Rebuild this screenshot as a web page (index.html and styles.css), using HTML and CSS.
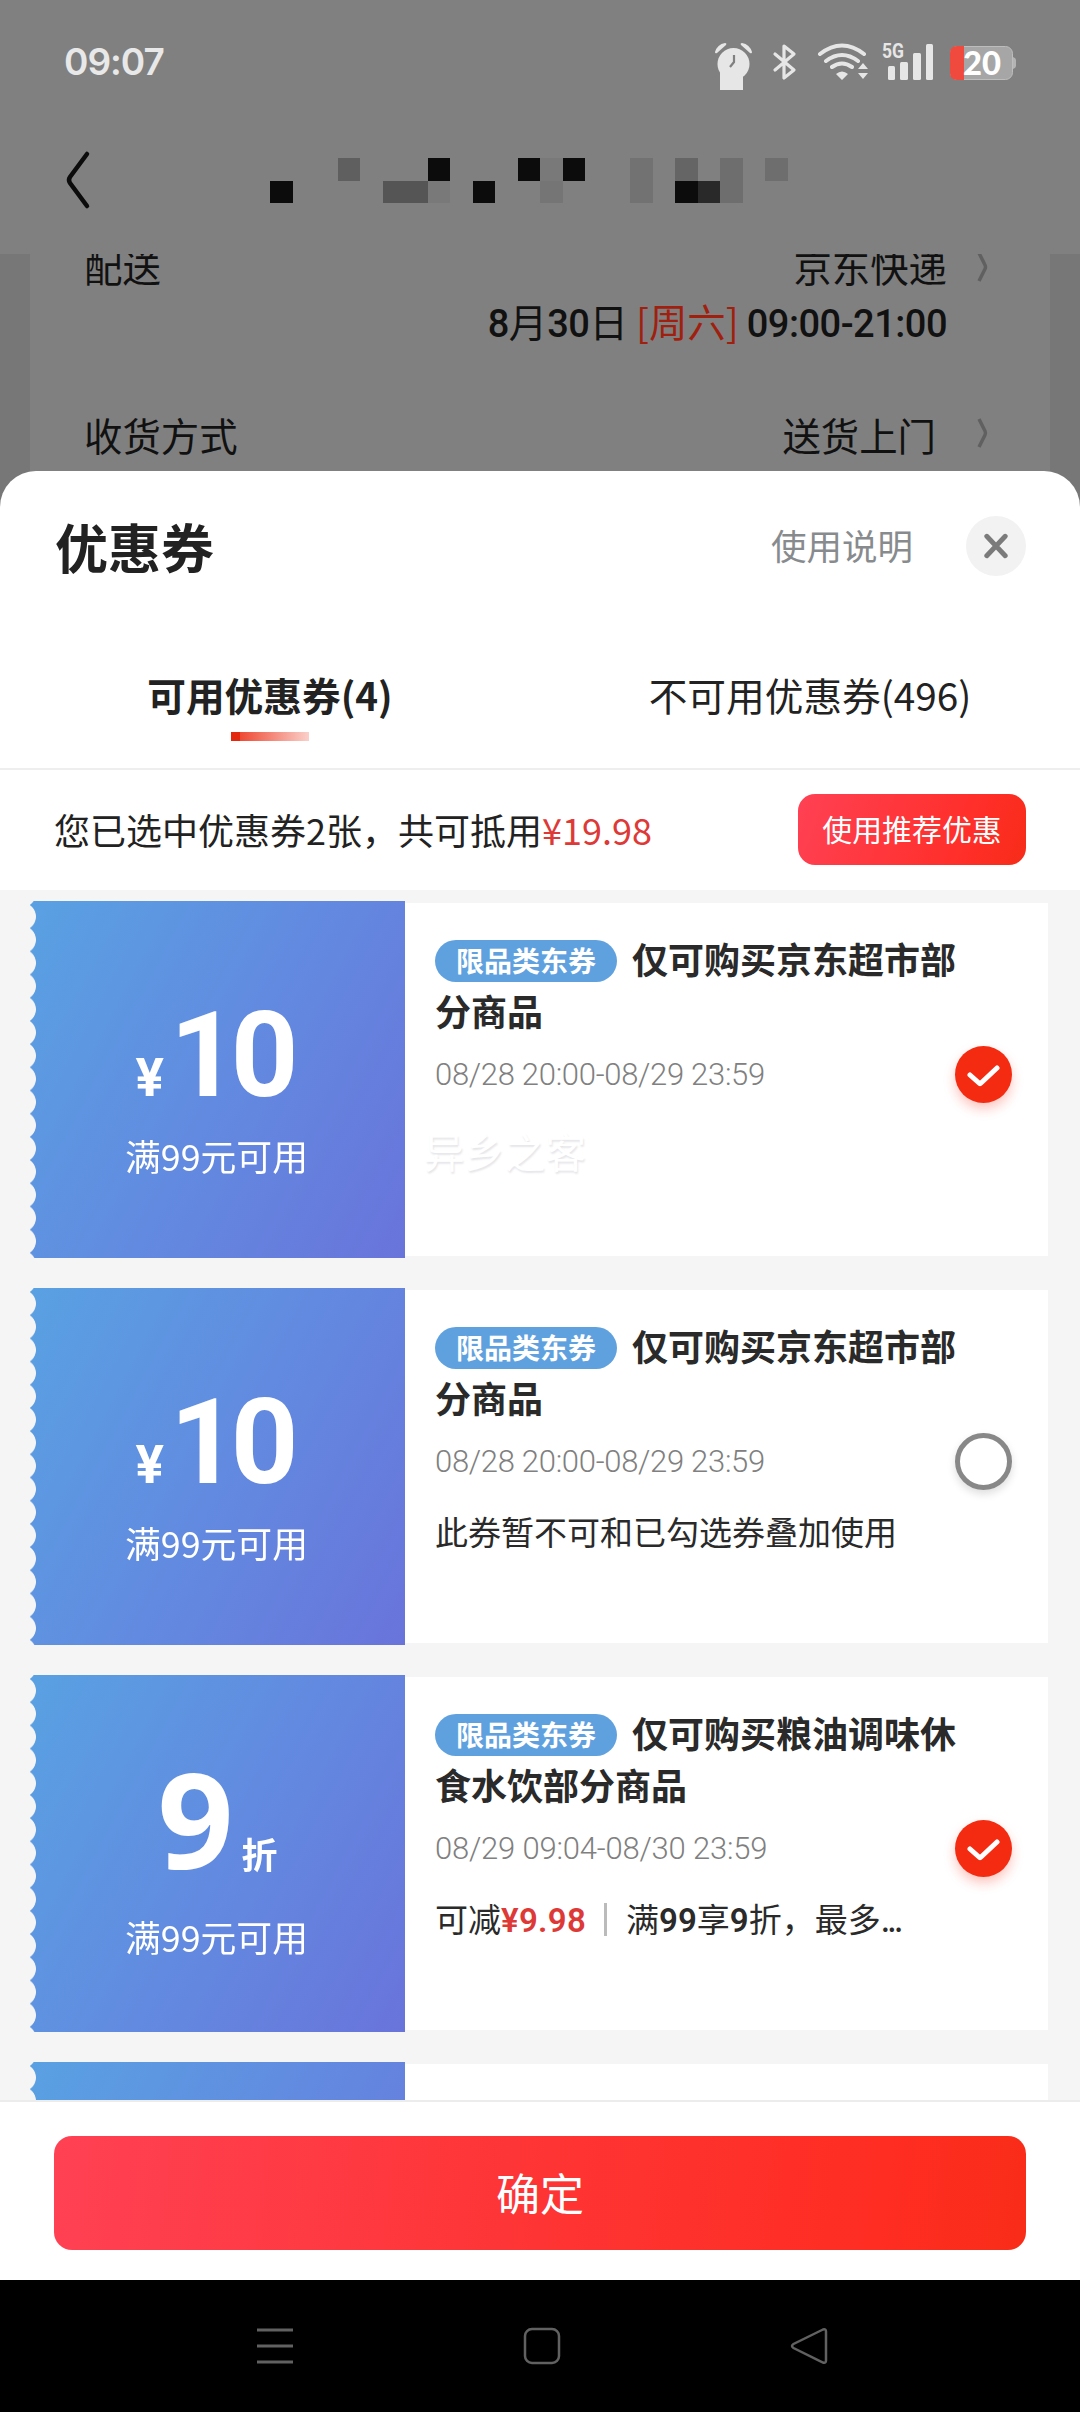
FILE: index.html
```html
<!DOCTYPE html>
<html lang="zh-CN">
<head>
<meta charset="utf-8">
<title>优惠券</title>
<link rel="stylesheet" href="styles.css">
</head>
<body>
<div class="screen">
  <header class="top">
    <div class="status">
      <span class="time">09:07</span>
      <svg class="status-icons" viewBox="0 0 306 52" width="306" height="52">
        <g fill="#e6e6e6">
          <circle cx="23.500" cy="24" r="16"/>
          <rect x="10" y="24" width="23" height="26"/>
          <path d="M5 12a13 13 0 0 1 10-9q2 0 1 2L7 13q-2 1-2-1zM42 12A13 13 0 0 0 32 3q-2 0-1 2l9 8q2 1 2-1z"/>
        </g>
        <path d="M24 15v7l-4 5" fill="none" stroke="#808080" stroke-width="2.200"/>
        <path d="M65 14l19 16-10 8V6l10 8-19 16" fill="none" stroke="#e6e6e6" stroke-width="3.200" stroke-linejoin="round" stroke-linecap="round"/>
        <g fill="none" stroke="#e6e6e6" stroke-width="4" stroke-linecap="round">
          <path d="M110 14Q132-3 154 14M116 21Q132 9 148 21M122 27Q132 20 142 27"/>
        </g>
        <path d="M126 34q6-5 12 0l-6 6zM148 29l5-6 5 6zM148 33l5 6 5-6z" fill="#e6e6e6"/>
        <text class="net" x="172" y="18" textLength="22" lengthAdjust="spacingAndGlyphs">5G</text>
        <g fill="#e6e6e6"><rect x="178" y="26" width="7" height="14" rx="1.500"/><rect x="190" y="22" width="8" height="18" rx="1.500"/><rect x="203" y="13" width="8" height="27" rx="1.500"/><rect x="216" y="4" width="7" height="36" rx="1.500"/></g>
        <rect x="240.500" y="6.500" width="62" height="33" rx="7" fill="#a6a6a6" stroke="#bdbdbd"/>
        <path d="M303 17q3 1 3 3v6q0 2-3 3z" fill="#b4b4b4"/>
        <path d="M254 6h-7q-7 0-7 7v20q0 7 7 7h7z" fill="#f04a3e"/>
        <text class="level" x="253" y="35" textLength="38" lengthAdjust="spacingAndGlyphs">20</text>
      </svg>
    </div>
    <div class="nav">
      <svg class="back" viewBox="0 0 26 60" width="26" height="60"><path d="M22 4L5 27q-2 3 0 6l17 23" fill="none" stroke="#0c0c0c" stroke-width="4.500" stroke-linecap="round"/></svg>
      <svg class="blocks" viewBox="0 0 23 2" width="518" height="45" preserveAspectRatio="none" shape-rendering="crispEdges">
        <g fill="#0c0c0c"><path d="M0 1h1v1H0zM7 0h1v1H7zM9 1h1v1H9zM11 0h1v1h-1zM13 0h1v1h-1zM18 1h1v1h-1z"/></g>
        <path d="M3 0h1v1H3z" fill="#5f5f5f"/><path d="M5 1h2v1H5z" fill="#555"/>
        <path d="M7 1h1v1H7zM12 0h1v1h-1z" fill="#797979"/><path d="M12 1h1v1h-1z" fill="#757575"/>
        <path d="M16 0h1v2h-1z" fill="#727272"/><path d="M18 0h1v1h-1z" fill="#656565"/>
        <path d="M19 1h1v1h-1z" fill="#292929"/><path d="M20 0h1v2h-1zM22 0h1v1h-1z" fill="#6e6e6e"/>
      </svg>
    </div>
  </header>

  <section class="order">
    <div class="panel">
      <div class="row row-ship"><span>配送</span><span class="value">京东快递</span><svg class="chev" viewBox="0 0 12 30" width="12" height="30"><path d="M2 1l6 12q1 2 0 4L2 29" fill="none" stroke="#606060" stroke-width="3.500"/></svg></div>
      <div class="row row-date"><span class="date"><b>8</b>月<b>30</b>日 <i>[周六]</i> <b class="hours">09:00-21:00</b></span></div>
      <div class="row row-way"><span>收货方式</span><span class="value">送货上门</span><svg class="chev" viewBox="0 0 12 30" width="12" height="30"><path d="M2 1l6 12q1 2 0 4L2 29" fill="none" stroke="#606060" stroke-width="3.500"/></svg></div>
    </div>
  </section>

  <main class="sheet">
    <div class="sheet-head">
      <h1>优惠券</h1>
      <span class="help">使用说明</span>
      <span class="close"><svg viewBox="0 0 24 24" width="26" height="26"><path d="M3.500 3l17 18M20.500 3l-17 18" stroke="#7b7b7b" stroke-width="4.500" stroke-linecap="round"/></svg></span>
    </div>
    <div class="tabs">
      <div class="tab active"><span>可用优惠券(4)</span></div>
      <div class="tab"><span>不可用优惠券(496)</span></div>
    </div>
    <div class="summary">
      <p>您已选中优惠券2张，共可抵用<span class="price">¥19.98</span></p>
      <button class="recommend">使用推荐优惠</button>
    </div>

    <div class="list">
      <article class="coupon">
        <div class="stub"><div class="amount"><small>¥</small>10</div><div class="cond">满99元可用</div></div>
        <div class="body">
          <h2><span class="tag">限品类东券</span>仅可购买京东超市部分商品</h2>
          <p class="time-range">08/28 20:00-08/29 23:59</p>
          <p class="ghost">异乡之客</p>
          <span class="check on"><svg viewBox="0 0 36 24" width="36" height="24"><path d="M4 12l9 8q1 1 2 0L31 5" fill="none" stroke="#fff" stroke-width="5" stroke-linecap="round" stroke-linejoin="round"/></svg></span>
        </div>
      </article>
      <article class="coupon">
        <div class="stub"><div class="amount"><small>¥</small>10</div><div class="cond">满99元可用</div></div>
        <div class="body">
          <h2><span class="tag">限品类东券</span>仅可购买京东超市部分商品</h2>
          <p class="time-range">08/28 20:00-08/29 23:59</p>
          <p class="note">此券暂不可和已勾选券叠加使用</p>
          <span class="check"></span>
        </div>
      </article>
      <article class="coupon">
        <div class="stub discount"><div class="amount">9<em>折</em></div><div class="cond">满99元可用</div></div>
        <div class="body">
          <h2><span class="tag">限品类东券</span>仅可购买粮油调味休食水饮部分商品</h2>
          <p class="time-range wide">08/29 09:04-08/30 23:59</p>
          <p class="note">可减<b class="price">¥9.98</b><span class="bar"></span>满<b>99</b>享<b>9</b>折，最多<span class="dots">...</span></p>
          <span class="check on"><svg viewBox="0 0 36 24" width="36" height="24"><path d="M4 12l9 8q1 1 2 0L31 5" fill="none" stroke="#fff" stroke-width="5" stroke-linecap="round" stroke-linejoin="round"/></svg></span>
        </div>
      </article>
      <article class="coupon"><div class="stub"></div><div class="body"></div></article>
    </div>

    <div class="actions"><button class="confirm">确定</button></div>
  </main>

  <footer class="sysnav">
    <svg viewBox="0 0 38 38" width="38" height="38"><path d="M1 3h36M1 19h36M1 35h36" stroke="#616161" stroke-width="3"/></svg>
    <svg viewBox="0 0 38 38" width="38" height="38"><rect x="2" y="2" width="34" height="34" rx="7" fill="none" stroke="#616161" stroke-width="2.500"/></svg>
    <svg viewBox="0 0 38 38" width="38" height="38"><path d="M33 2.500L3.500 17q-3 2 0 4L33 35.500q3 1 3-2v-29q0-3-3-2z" fill="none" stroke="#616161" stroke-width="2.500"/></svg>
  </footer>
</div>
</body>
</html>
```
FILE: styles.css
```css
* { box-sizing: border-box; margin: 0; padding: 0; }
body { font-family: "Noto Sans CJK SC", sans-serif; color: #222; }
button { border: 0; font: inherit; color: #fff; }
svg { display: block; flex: none; }

.screen { width: 1080px; height: 2412px; overflow: hidden; display: flex; flex-direction: column; background: #777; }

.top { height: 254px; background: #808080; flex: none; }
.status { height: 124px; padding: 40px 64px 0 64px; display: flex; justify-content: space-between; }
.time { font: 600 37px/44px Inter, sans-serif; color: #e8e8e8; letter-spacing: -1px; }
.net { font: 700 20px Roboto, sans-serif; fill: #e6e6e6; }
.level { font: 900 32px Lato, sans-serif; fill: #fff; }
.nav { display: flex; align-items: flex-start; padding: 26px 0 0 65px; }
.blocks { margin: 8px 0 0 179px; }

.order { height: 257px; flex: none; padding: 0 30px; overflow: hidden; }
.panel { height: 100%; background: #808080; padding: 0 61px 0 54px; color: #111; font-size: 38.400px; }
.row { display: flex; white-space: nowrap; line-height: 56px; }
.row .value { margin-left: auto; }
.chev { margin: 12px 0 0 30px; }
.row-ship { margin-top: -17px; }
.row-ship .chev { margin-top: 15px; }
.row-date { justify-content: flex-end; padding-right: 42px; margin-top: -1px; }
.row-way { margin-top: 54px; }
.row-way .value { padding-right: 11px; }
.date { word-spacing: -.5px; }
.date i { font-style: normal; color: #a02010; }
.date b { font-family: Roboto, sans-serif; font-weight: 500; font-size: 38px; letter-spacing: -.5px; }

.sheet { position: relative; margin-top: -40px; height: 1809px; flex: none; background: #fff; border-radius: 36px 36px 0 0; display: flex; flex-direction: column; }
.sheet-head { height: 150px; padding: 0 54px 0 55px; display: flex; align-items: center; }
.sheet-head h1 { font-size: 53px; line-height: 60px; }
.help { margin-left: auto; font-size: 35.500px; color: #888b8e; line-height: 52px; padding-bottom: 2px; }
.close { width: 60px; height: 60px; margin-left: 53px; border-radius: 50%; background: #f2f2f2; display: flex; align-items: center; justify-content: center; }
.tabs { height: 149px; display: flex; border-bottom: 2px solid #eee; font-size: 38.700px; }
.tab { flex: 1; display: flex; flex-direction: column; align-items: center; padding-top: 45px; line-height: 56px; }
.active { font-weight: 700; }
.active::after { content: ""; width: 78px; height: 9px; margin-top: 10px; background: linear-gradient(90deg, #e2290f 9px, #ee4a34 9px, #fad0ca); }
.summary { height: 120px; flex: none; padding: 0 54px; display: flex; align-items: center; justify-content: space-between; font-size: 36px; }
.summary p { line-height: 52px; padding-bottom: 3px; }
.price { color: #dd3a37; }
.recommend { width: 228px; height: 71px; margin-bottom: 2px; padding-bottom: 2px; border-radius: 17px; font-size: 29.900px; background: linear-gradient(110deg, #ff4154, #ff2e28 75%, #f72c18); }

.list { height: 1210px; flex: none; overflow: hidden; background: #f5f5f5; padding: 11px 32px 0 30px; display: flex; flex-direction: column; gap: 30px; }
.coupon { display: flex; align-items: center; height: 357px; flex: none; }
.stub { width: 375px; height: 357px; color: #fff; text-align: center; padding-top: 95px; background: linear-gradient(118deg, #59a1e2, #628ae0 52%, #6974db);
  -webkit-mask: radial-gradient(circle at -8px 50%, transparent 13.500px, #000 14.300px) 0 4px / 100% 23.200px;
  mask: radial-gradient(circle at -8px 50%, transparent 13.500px, #000 14.300px) 0 4px / 100% 23.200px; }
.amount { font: 700 118px/120px Roboto, sans-serif; height: 120px; white-space: nowrap; padding-right: 8px; letter-spacing: -7px; }
.amount small { font-size: 53px; margin-right: 6px; letter-spacing: 0; }
.cond { font-size: 35.800px; line-height: 52px; margin-top: 13px; padding-right: 2px; }
.discount .amount { font-family: "Noto Sans", sans-serif; font-size: 133px; height: 128px; line-height: 128px; padding: 0; margin-top: -16px; letter-spacing: 0; }
.discount .amount em { font: 700 36px "Noto Sans CJK SC", sans-serif; margin-left: 8px; }
.discount .cond { margin-top: 28px; }
.body { position: relative; flex: 1; height: 353px; background: #fff; padding: 30px 80px 0 30px; }
.body h2 { font-size: 36px; line-height: 51.500px; color: #2a2a2a; width: 525px; }
.tag { display: inline-block; height: 42px; line-height: 40px; padding: 0 21px; margin-right: 15px; border-radius: 21px; background: #5fa1df; color: #fff; font-size: 28px; vertical-align: 2px; }
.time-range { font: 300 31px/40px Roboto, sans-serif; color: #808080; margin-top: 19px; letter-spacing: -.3px; white-space: nowrap; }
.time-range.wide { letter-spacing: -.2px; }
.note { font-size: 33px; line-height: 48px; margin-top: 25px; color: #2a2a2a; white-space: nowrap; }
.note b { font-family: Roboto, sans-serif; font-weight: 600; }
.note .price { letter-spacing: .3px; }
.dots { letter-spacing: -2.500px; }
.bar { display: inline-block; width: 3px; height: 33px; margin: 0 19px 0 18px; background: #bbb; vertical-align: -4px; }
.ghost { font-size: 40.500px; line-height: 56px; margin: 28px 0 0 -11px; color: #fff; text-shadow: 1px 2px 2px #e6e6ea; }
.check { position: absolute; right: 36px; top: 143px; width: 57px; height: 57px; border-radius: 50%; border: 5px solid #888; box-shadow: 0 4px 8px #0002; display: flex; align-items: center; justify-content: center; }
.check.on { border: 0; background: #f42b10; box-shadow: 0 6px 12px #f42b1044; }

.actions { border-top: 2px solid #ececec; height: 180px; padding: 34px 54px 0; }
.confirm { display: block; width: 100%; height: 114px; padding-bottom: 2px; border-radius: 18px; font-size: 44px; background: linear-gradient(97deg, #ff4154, #fe3434 50%, #ff2d22 85%, #f92c18); }

.sysnav { height: 132px; flex: none; background: #000; display: flex; gap: 229px; padding: 47px 0 0 256px; }
```
